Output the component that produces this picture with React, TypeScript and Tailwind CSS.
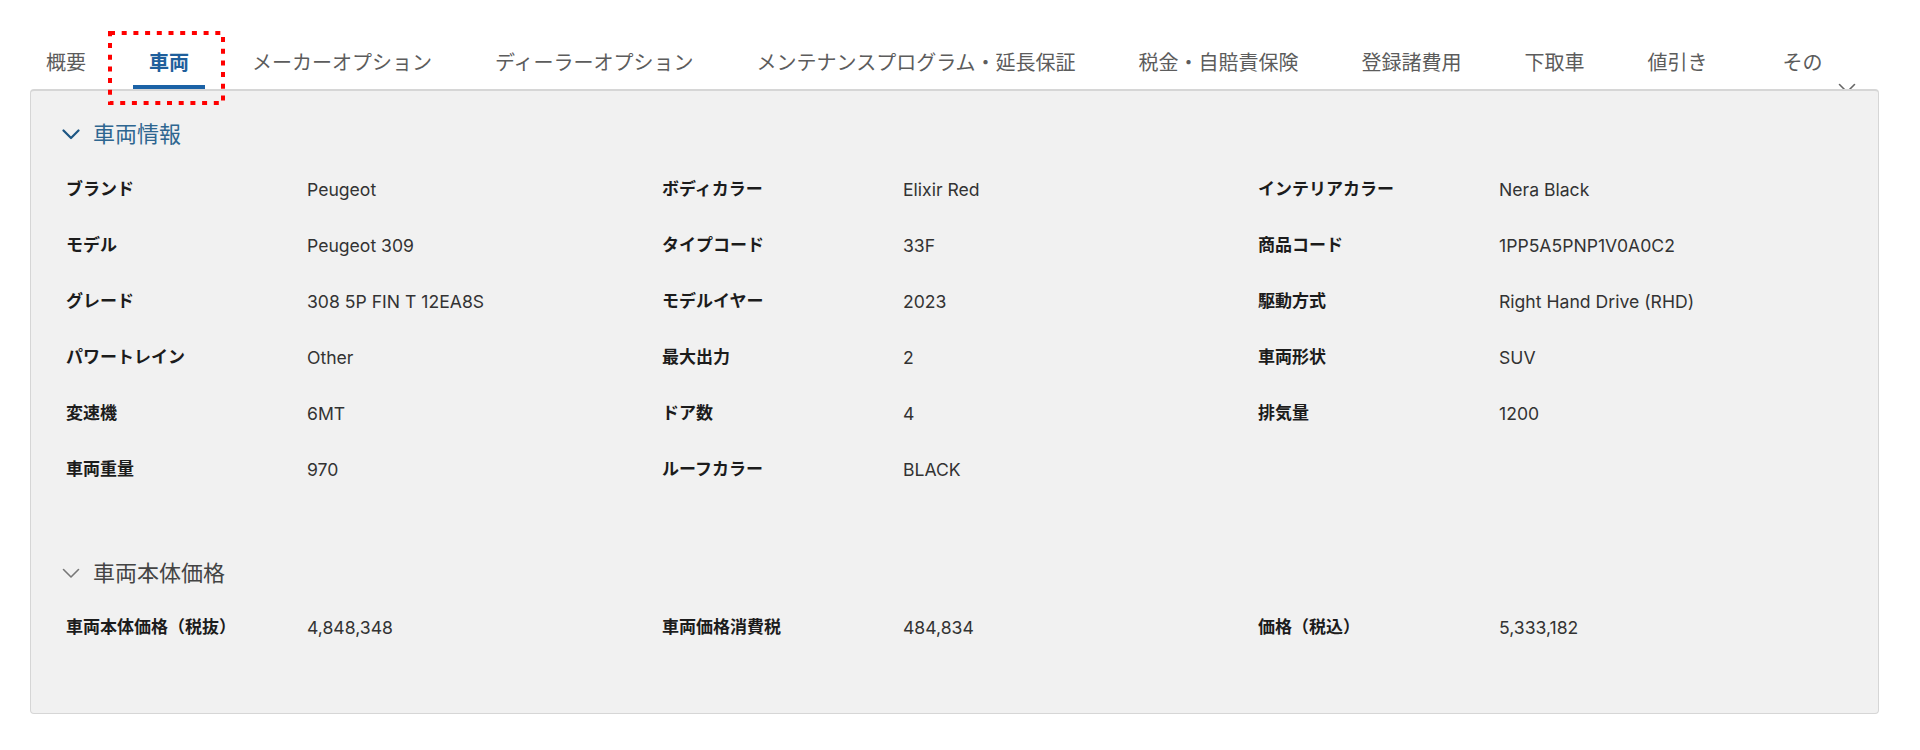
import { Fragment } from 'react';

const tabs = [
  '概要',
  '車両',
  'メーカーオプション',
  'ディーラーオプション',
  'メンテナンスプログラム・延長保証',
  '税金・自賠責保険',
  '登録諸費用',
  '下取車',
  '値引き',
];

const vehicleRows: [string, string][][] = [
  [['ブランド', 'Peugeot'], ['ボディカラー', 'Elixir Red'], ['インテリアカラー', 'Nera Black']],
  [['モデル', 'Peugeot 309'], ['タイプコード', '33F'], ['商品コード', '1PP5A5PNP1V0A0C2']],
  [['グレード', '308 5P FIN T 12EA8S'], ['モデルイヤー', '2023'], ['駆動方式', 'Right Hand Drive (RHD)']],
  [['パワートレイン', 'Other'], ['最大出力', '2'], ['車両形状', 'SUV']],
  [['変速機', '6MT'], ['ドア数', '4'], ['排気量', '1200']],
  [['車両重量', '970'], ['ルーフカラー', 'BLACK'], ['', '']],
];

const priceRow: [string, string][] = [
  ['車両本体価格（税抜）', '4,848,348'],
  ['車両価格消費税', '484,834'],
  ['価格（税込）', '5,333,182'],
];

function Chevron({ color, width }: { color: string; width: number }) {
  return (
    <svg width="18" height="11" viewBox="0 0 18 11" fill="none">
      <path d="M1.5 1.5 L9 9 L16.5 1.5" stroke={color} strokeWidth={width} strokeLinecap="round" strokeLinejoin="round" />
    </svg>
  );
}

function Field({ label, value }: { label: string; value: string }) {
  return (
    <div className="flex h-14 items-center">
      <div className="w-[241px] shrink-0 text-[17px] font-bold text-[#1c1c1c]">{label}</div>
      <div className="text-[17.6px] text-[#333333]">{value}</div>
    </div>
  );
}

export default function App() {
  return (
    <div className="relative min-h-[750px] bg-white pl-[30px] pr-[41px] pt-[49px] font-['Inter','Noto_Sans_CJK_JP',sans-serif]">
      {/* Tabs */}
      <div className="relative flex items-end">
        {tabs.map((t, i) => {
          const active = i === 1;
          return (
            <div key={t} className="mr-[31px] flex flex-col items-stretch">
              <div
                className={
                  active
                    ? 'px-4 text-[20px] leading-[28px] font-bold text-[#1f5f9c]'
                    : 'px-4 text-[20px] leading-[28px] text-[#5c5c5c]'
                }
              >
                {t}
              </div>
              <div className={active ? 'mt-2 h-1 bg-[#1b62a6]' : 'mt-2 h-1'} />
            </div>
          );
        })}
        <div className="ml-[12px] flex flex-col">
          <div className="px-4 text-[20px] leading-[28px] text-[#5c5c5c]">その</div>
          <div className="mt-2 h-1" />
        </div>
        <div className="absolute left-[1808px] top-[34px]">
          <Chevron color="#666666" width={1.6} />
        </div>
      </div>

      {/* Panel */}
      <div className="relative z-10 rounded-[4px] border border-t-2 border-[#d6d6d6] bg-[#f1f1f1] pb-[57px] pt-[27px]">
        <div className="flex h-8 items-center pl-[31px]">
          <Chevron color="#1d5683" width={2.2} />
          <span className="ml-[13px] text-[22px] text-[#2e6690]">車両情報</span>
        </div>
        <div className="mt-3 grid grid-cols-3 pl-[35px] pr-[24px]">
          {vehicleRows.map((row, r) => (
            <Fragment key={r}>
              {row.map(([l, v], c) => (
                <Field key={c} label={l} value={v} />
              ))}
            </Fragment>
          ))}
        </div>

        <div className="mt-[59px] flex h-8 items-center pl-[31px]">
          <Chevron color="#777777" width={1.6} />
          <span className="ml-[13px] text-[22px] text-[#444444]">車両本体価格</span>
        </div>
        <div className="mt-[11px] grid grid-cols-3 pl-[35px] pr-[24px]">
          {priceRow.map(([l, v]) => (
            <Field key={l} label={l} value={v} />
          ))}
        </div>
      </div>

      {/* Highlight annotation */}
      <svg className="absolute left-[108px] top-[31px] z-20" width="117" height="74" viewBox="0 0 117 74" fill="none">
        <rect x="2" y="2" width="113" height="70" stroke="#ff0000" strokeWidth="4" strokeDasharray="5 6.7" />
      </svg>
    </div>
  );
}
